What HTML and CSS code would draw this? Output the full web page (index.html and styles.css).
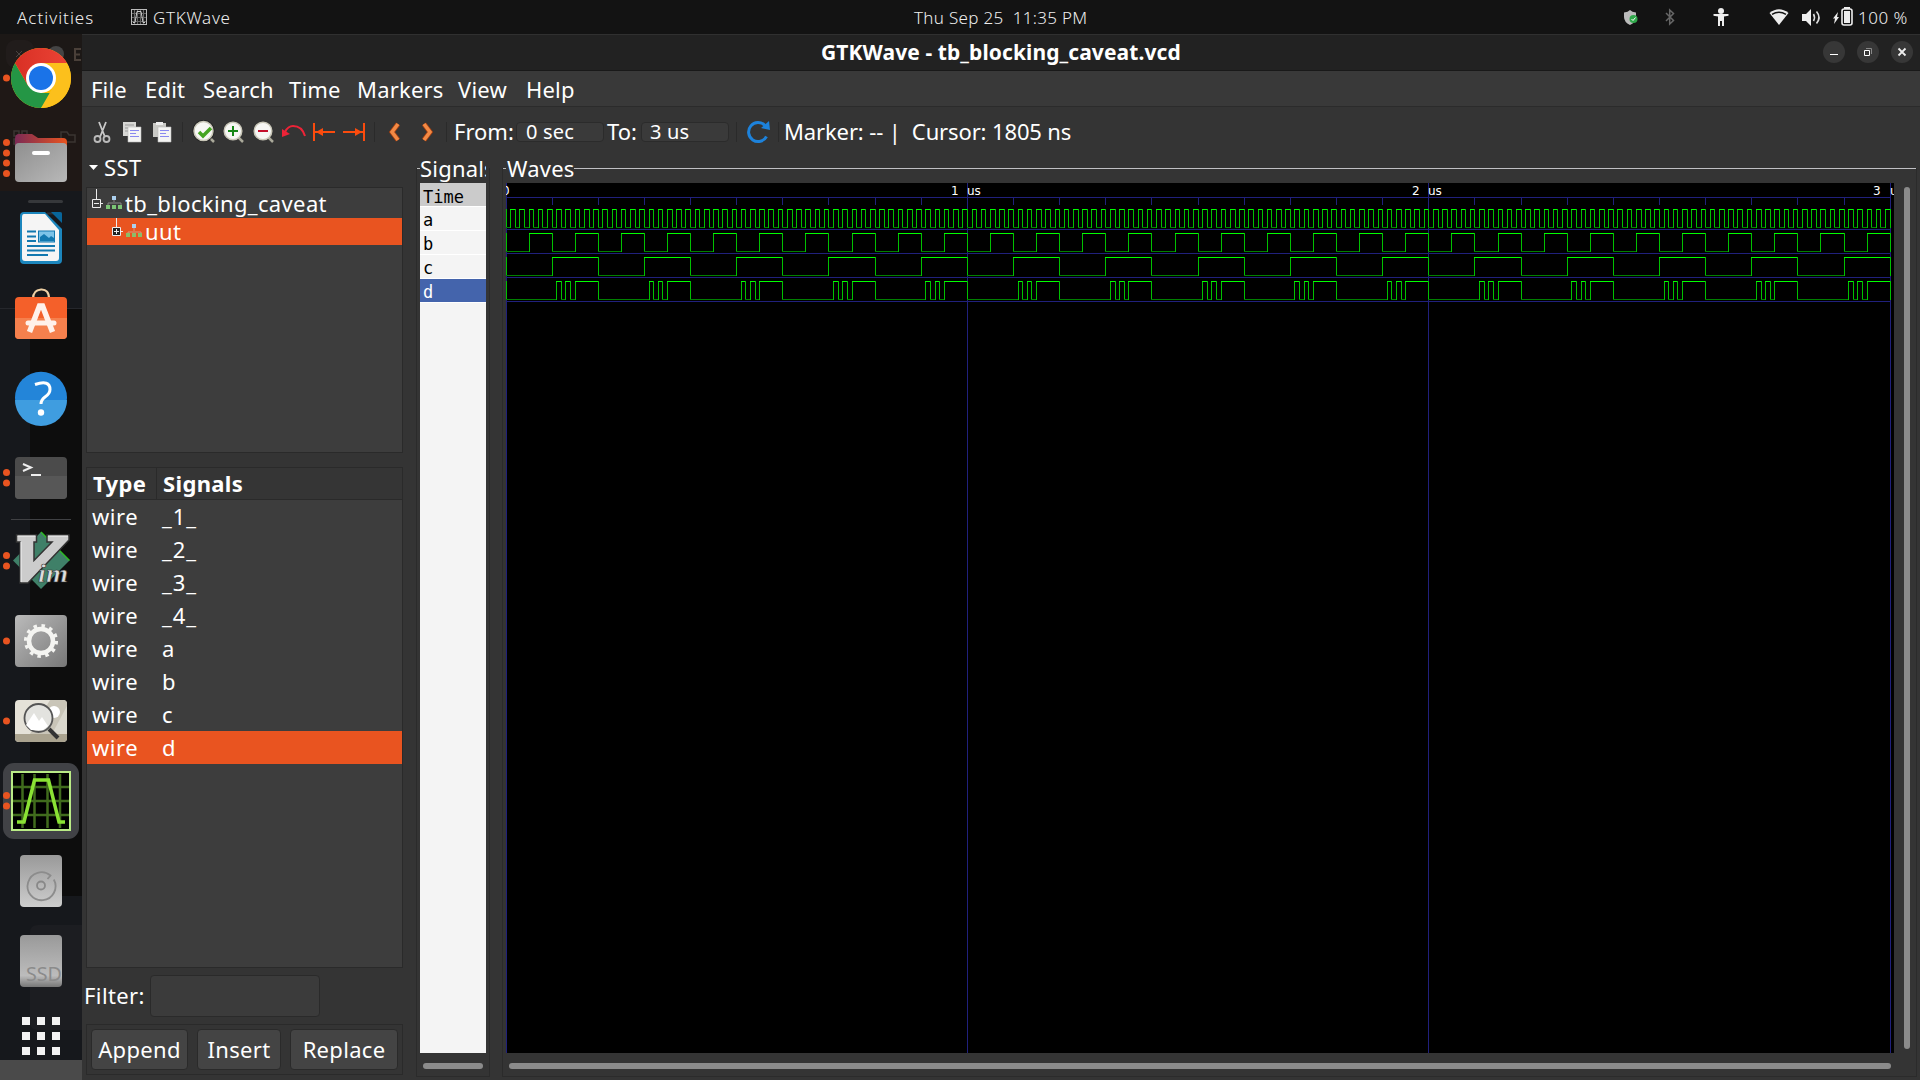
FILE: index.html
```html
<!DOCTYPE html>
<html lang="en">
<head>
<meta charset="utf-8">
<title>GTKWave - tb_blocking_caveat.vcd</title>
<link rel="stylesheet" href="styles.css">
</head>
<body>
<header class="topbar">
  <span class="activities">Activities</span>
  <svg class="app-icon" width="16" height="16" viewBox="0 0 16 16"><rect x=".5" y=".5" width="15" height="15" fill="#181818" stroke="#bbb"/><path d="M3.500 1v14M6.500 1v14M9.500 1v14M12.500 1v14M1 4.500h14M1 8.500h14M1 12.500h14" stroke="#666"/><path d="M2 13.500h2L6 2.500h4l2 11h2" fill="none" stroke="#ccc"/></svg>
  <span class="appname">GTKWave</span>
  <span class="clock">Thu Sep 25&nbsp; 11:35 PM</span>
  <svg width="240" height="34" viewBox="1620 0 240 34">
    <path d="M1624 12.500Q1628 12 1630 10Q1632 12 1636 12.500V17Q1636 22 1630 25Q1624 22 1624 17Z" fill="#bbb"/><circle cx="1633.500" cy="19" r="4" fill="#2fa84a"/><path d="M1631.500 19l1.500 1.500 2.500-3" stroke="#fff" fill="none"/>
    <path d="M1666 13l7.500 7.500-3.800 3.500V10l3.800 3.500-7.500 7.500" fill="none" stroke="#666" stroke-width="1.500"/>
    <circle cx="1721" cy="11" r="3" fill="#eee"/><path d="M1713.500 14h15v1.800l-4.500.6V26h-2v-5h-2v5h-2v-9.600l-4.500-.6z" fill="#eee"/>
    <path d="M1769.500 13Q1779 5.500 1788.500 13L1779 25Z" fill="#eee"/><path d="M1772 14.300q7-4.300 14 0" fill="none" stroke="#151515" stroke-width="1.500"/>
    <path d="M1802 14h4l5-5v17l-5-5h-4z" fill="#eee"/><path d="M1813.500 14q2 3.500 0 7M1816.500 11.500q5 6 0 12" fill="none" stroke="#ddd" stroke-width="1.600"/>
    <path d="M1838 12l-5 6.500h2l-1 5.500 5-7h-2z" fill="#eee"/><rect x="1842" y="9" width="10" height="16" rx="2" fill="none" stroke="#eee" stroke-width="1.600"/><rect x="1844" y="7" width="6" height="2" fill="#eee"/><rect x="1844" y="11" width="6" height="12" fill="#eee"/>
  </svg>
  <span class="battery">100 %</span>
</header>
<div class="desktop">
  <aside class="dock">
    <svg width="82" height="1046" viewBox="0 34 82 1046">
      <defs>
        <linearGradient id="gray" x2="1" y2="1"><stop stop-color="#bbb"/><stop offset="1" stop-color="#777"/></linearGradient>
        <linearGradient id="folder" x2="1" y2="1"><stop stop-color="#8f8f8f"/><stop offset="1" stop-color="#b8b8b8"/></linearGradient>
        <linearGradient id="tab"><stop stop-color="#7b2a55"/><stop offset="1" stop-color="#e95420"/></linearGradient>
        <linearGradient id="disk" x2="0" y2="1"><stop stop-color="#999"/><stop offset="1" stop-color="#cdcdcd"/></linearGradient>
        <linearGradient id="ssd" x2="0" y2="1"><stop stop-color="#999"/><stop offset=".78" stop-color="#bcbcbc"/><stop offset="1" stop-color="#777"/></linearGradient>
        <linearGradient id="red"><stop stop-color="#d93025"/><stop offset="1" stop-color="#ea4335"/></linearGradient>
      </defs>
      <path d="M0 34h82v157H0z" fill="#1f1816"/><path d="M0 34h82v40H0z" fill="#1c1816"/><rect x="6" y="40" width="28" height="28" rx="9" fill="#211c1b"/><circle cx="56" cy="54" r="8" fill="#444"/><path d="M81 49h-6v11h6M75 54.500h5" stroke="#4a4039" stroke-width="2" fill="none"/><path d="M16 51l6 6M22 51l-6 6" stroke="#4a4542"/>
      <path d="M14 131h5v5h-5zM22 131h5v5h-5zM14 139h5v5h-5zM61 132h6l2 3h6v7H61z" fill="none" stroke="#3b3532" stroke-width="1.500"/>
      <path d="M0 191h82v869H0z" fill="#16181c"/><path d="M30 309h52v587H30z" fill="#0d0d0d"/><path d="M0 308.500h82" stroke="#25272c"/><path d="M38 925h44v105H38q-8 0-8-8V933q0-8 8-8" fill="#1c1d21"/><path d="M0 1060h82v20H0z" fill="#4a4a4a"/>
      <!-- Chrome -->
      <g><circle cx="41" cy="78" r="30" fill="#fbbc04"/><path d="M15 63L28 85.500 41 93h13L41 108A30 30 0 0 1 15 63" fill="#249645"/><path d="M15 63A30 30 0 0 1 67 63H41L28 85.500Z" fill="url(#red)"/><path d="M54 85.500L41 108A30 30 0 0 0 67 63H41z" fill="#fcc01c"/><circle cx="41" cy="78" r="15" fill="#fff"/><circle cx="41" cy="78" r="12" fill="#1a73e8"/></g>
      <!-- Files -->
      <path d="M15 148v-9q0-5 4-5h13l6 4h25q4 0 4 4v8z" fill="url(#tab)"/><rect x="15" y="143" width="52" height="39" rx="4" fill="url(#folder)"/><rect x="32" y="151" width="18" height="4" rx="2" fill="#fff"/>
      <rect x="28" y="200" width="35" height="3" rx="1.500" fill="#36383b"/><path d="M47 213.500h15" stroke="#2d3035" stroke-width="2"/>
      <!-- Writer -->
      <path d="M24 212h21l17 17v31q0 4-4 4H24q-4 0-4-4v-44q0-4 4-4" fill="#1c86bd"/><path d="M24 214h21l14 16v28q0 3-3 3H25q-3 0-3-3v-41q0-3 2-3" fill="#f5f5f5"/><path d="M51 212h9q2 0 2 2v9z" fill="#08669b"/><path d="M27 231.500h9M27 236.500h9M27 241h9M27 246h28M27 250.500h28M27 255h21" stroke="#1278af" stroke-width="1.800"/><rect x="38.500" y="231" width="16" height="11" fill="#7cc3e8" stroke="#1278af"/><path d="M40 241v-4l4-3 5 4 2-2 3 2v3z" fill="#1278af"/>
      <!-- Software -->
      <path d="M33 299q0-9 8-9.500t8 9.500" fill="none" stroke="#efd0a4" stroke-width="2.200"/><rect x="15" y="297" width="52" height="42" rx="4" fill="#f4602a"/><path d="M15 318h52v17q0 4-4 4H19q-4 0-4-4z" fill="#f5804d"/><path d="M29.500 332L39.500 306h3l10 26" fill="none" stroke="#fff1ea" stroke-width="5.500"/><path d="M28 323h26" stroke="#fff1ea" stroke-width="5" stroke-linecap="round"/>
      <!-- Help -->
      <circle cx="41" cy="397.700" r="26" fill="#2385d9"/><path d="M15 400a26 26 0 0 0 52 0z" fill="#3f9de0"/><path d="M35 384.500q15-5 15 5 0 4-5 7.500-4 3-4 7" fill="none" stroke="#fff" stroke-width="3"/><circle cx="41" cy="412.500" r="3.200" fill="#fff"/>
      <!-- Terminal -->
      <rect x="15" y="457" width="52" height="42" rx="4" fill="#4b4b4b"/><path d="M15 476h52v19q0 4-4 4H19q-4 0-4-4z" fill="#575757"/><path d="M23 464l8 3.500-8 3.500M31 475h10" fill="none" stroke="#eee" stroke-width="2"/>
      <path d="M11 519.500h60" stroke="#404144"/>
      <!-- Vim -->
      <path d="M41 532l28.500 28.500L41 589 13 560.500z" fill="#3f8068"/><path d="M41 532l28.500 28.500" stroke="#2dbb22" stroke-width="1.500"/><path d="M16.500 535h20v7h-2.500v18.500L52 542h-5v-7h22v5L28 583h-8v-41h-3.500z" fill="#ccc" stroke="#333" stroke-width="1.500"/><path d="M17.500 536h18M48 536h20M21 542v40" stroke="#f4f4f4"/><text x="38" y="581.500" class="vim" textLength="30" lengthAdjust="spacingAndGlyphs">im</text>
      <!-- Settings -->
      <rect x="15" y="615" width="52" height="52" rx="4" fill="url(#gray)"/><circle cx="41" cy="641" r="12" fill="none" stroke="#f4f4f1" stroke-width="4.500"/><circle cx="41" cy="641" r="15.300" fill="none" stroke="#f4f4f1" stroke-width="3.500" stroke-dasharray="3.500 4.511"/>
      <!-- Image viewer -->
      <rect x="15" y="700" width="52" height="42" rx="4" fill="#e5e2d8"/><path d="M50 700h13q4 0 4 4v30H30z" fill="#c9c5b8"/><path d="M67 706v28H52z" fill="#dad8ce"/><path d="M15 734h52v4q0 4-4 4H19q-4 0-4-4z" fill="#aaa38f"/><circle cx="54" cy="712" r="6" fill="#fff"/><circle cx="38.500" cy="718" r="14" fill="#e3e3df" stroke="#555" stroke-width="1.800"/><path d="M26 725l8-12 5 8 3-4 6 9-5 4H31z" fill="#fff"/><path d="M49 729l9 9" stroke="#333" stroke-width="4"/>
      <!-- GTKWave -->
      <rect x="3" y="763" width="76" height="76" rx="11" fill="#414246"/><rect x="12" y="772" width="58" height="58" fill="#000" stroke="#b9ea86" stroke-width="2"/><path d="M22.500 774v54M34.500 774v54M47.500 774v54M60 774v54M13 787h56M13 801h56M13 815h56" stroke="#406b1d" stroke-width="2.500"/><path d="M17 822h7L34.500 780h14L59 822h6" fill="none" stroke="#8ae234" stroke-width="3.500"/>
      <!-- Drives -->
      <rect x="20" y="855" width="42" height="52" rx="4" fill="url(#disk)"/><path d="M53.800 879.500a14 14 0 1 1-3.300-4l-3 3.500" fill="none" stroke="#8c8c8c" stroke-width="1.800"/><circle cx="41" cy="885.500" r="4" fill="none" stroke="#888" stroke-width="1.800"/>
      <rect x="20" y="935" width="42" height="52" rx="4" fill="url(#ssd)"/><text x="26" y="981" class="ssd" textLength="36" lengthAdjust="spacingAndGlyphs">SSD</text>
      <path d="M22 1021h8M37 1021h8M52 1021h8M22 1036h8M37 1036h8M52 1036h8M22 1051h8M37 1051h8M52 1051h8" stroke="#f2f2f2" stroke-width="8"/>
      <g fill="#e95420"><circle cx="6.500" cy="78" r="3.500"/><circle cx="6.500" cy="142.500" r="3.500"/><circle cx="6.500" cy="153" r="3.500"/><circle cx="6.500" cy="163" r="3.500"/><circle cx="6.500" cy="173.500" r="3.500"/><circle cx="6.500" cy="472.500" r="3.500"/><circle cx="6.500" cy="483" r="3.500"/><circle cx="6.500" cy="555.500" r="3.500"/><circle cx="6.500" cy="566" r="3.500"/><circle cx="6.500" cy="641" r="3.500"/><circle cx="6.500" cy="721" r="3.500"/><circle cx="6.500" cy="795.500" r="3.500"/><circle cx="6.500" cy="806" r="3.500"/></g>
    </svg>
  </aside>
  <main class="window">
    <div class="titlebar"><span class="title">GTKWave - tb_blocking_caveat.vcd</span>
      <svg class="controls" width="90" height="24" viewBox="0 0 90 24"><g fill="#373737"><circle cx="11" cy="12" r="11"/><circle cx="45" cy="12" r="11"/><circle cx="79" cy="12" r="11"/></g><path d="M7 14.500h8M41.500 10.500h5v5h-5z" fill="none" stroke="#fff"/><path d="M43 8.500h5.500v5.500" fill="none" stroke="#888"/><path d="M75.500 8.500l7 7M82.500 8.500l-7 7" stroke="#eee" stroke-width="1.800"/></svg>
    </div>
    <nav class="menubar"><span class="m1">File</span><span class="m2">Edit</span><span class="m3">Search</span><span class="m4">Time</span><span class="m5">Markers</span><span class="m6">View</span><span class="m7">Help</span></nav>
    <div class="toolbar">
      <svg width="368" height="50" viewBox="82 107 368 50">
        <path d="M99 122l6 15M106 122l-6 15" stroke="#c8c8c8" stroke-width="1.800"/><circle cx="97.500" cy="139" r="3" fill="none" stroke="#bbb" stroke-width="1.800"/><circle cx="106.500" cy="139" r="3" fill="none" stroke="#bbb" stroke-width="1.800"/>
        <path d="M123 122h13v14h-13z" fill="#d7d7d4"/><path d="M125 125h9M125 128h7M125 131h5" stroke="#999"/><path d="M128 127h13v15h-13z" fill="#f5f5f3" stroke="#bbb" stroke-width=".6"/><path d="M130 130.500h9M130 133.500h6M130 136.500h9" stroke="#8a8af0"/>
        <path d="M153 123h13v14h-13z" fill="#c9c9c5"/><path d="M156 122h7v3h-7z" fill="#eee"/><path d="M158 127h13v15h-13z" fill="#f5f5f3" stroke="#bbb" stroke-width=".6"/><path d="M160 130.500h9M160 133.500h6M160 136.500h9" stroke="#8a8af0"/>
        <path d="M182.500 122v20M374.500 122v20M446.500 122v20" stroke="#2a2a2a"/>
        <path d="M209 137l5 5M238 137l5 5M268 137l5 5" stroke="#aaa99a" stroke-width="2.500"/><circle cx="203.500" cy="131" r="11" fill="#222"/><g fill="#f7f7f4" stroke="#c9c7b8" stroke-width="1.500"><circle cx="203.500" cy="131" r="9.500"/><circle cx="233" cy="131" r="8.800"/><circle cx="263" cy="131" r="8.800"/></g><path d="M199 132l4 4 8-8" fill="none" stroke="#45a522" stroke-width="3.500"/><path d="M228 131h10M233 126v10" stroke="#178717" stroke-width="2"/><path d="M258 131h10" stroke="#c40f2b" stroke-width="2"/>
        <path d="M305 136q-3-10-12-10-5 0-8 6" fill="none" stroke="#ed2337" stroke-width="2"/><path d="M282 129v8l8-3z" fill="#ed2337"/>
        <path d="M314 123v18M315 132h20M364 123v18M343 132h20" stroke="#fb4b0d" stroke-width="2"/><path d="M316 132l7-4v8zM362 132l-7-4v8z" fill="#fb4b0d"/>
        <path d="M398 124l-6 8 6 8M424 124l6 8-6 8" fill="none" stroke="#a84010" stroke-width="5"/><path d="M398 124l-6 8 6 8M424 124l6 8-6 8" fill="none" stroke="#f28a45" stroke-width="3.500"/>
      </svg>
      <span class="ui from">From:</span><div class="entry">0 sec</div><span class="ui to">To:</span><div class="entry e2">3 us</div>
      <svg class="reload" width="46" height="24" viewBox="0 0 46 24"><path d="M1.500 2v20M43.500 2v20" stroke="#2a2a2a"/><path d="M31.500 16.500A9.500 9.500 0 1 1 30 5.500" fill="none" stroke="#1d82db" stroke-width="3"/><path d="M34 1l1 9-9-2z" fill="#1d82db"/></svg>
      <span class="ui marker">Marker: -- |&nbsp; Cursor: 1805 ns</span>
    </div>
    <div class="content">
      <section class="left">
        <div class="sst"><i></i><span>SST</span></div>
        <div class="tree">
          <div class="row r1"><svg width="38" height="28" viewBox="0 0 38 28"><path d="M9.500 1v10M14 15.500h2" stroke="#eee"/><path d="M5.500 11.500h8v8h-8zM7 15.500h5" fill="none" stroke="#eee"/><path d="M27 9v5M21 18v-3h13v3" fill="none" stroke="#888"/><path d="M25 8h4v4h-4z" fill="#acd0ef"/><path d="M19 17h4v4h-4zM25 17h4v4h-4zM31 17h4v4h-4z" fill="#7cc576"/></svg><span>tb_blocking_caveat</span></div>
          <div class="row r2"><svg width="58" height="27" viewBox="0 0 58 27"><path d="M29.500 0v9M34 13.500h2" stroke="#eee"/><path d="M25.500 9.500h8v8h-8z" fill="#222" stroke="#eee"/><path d="M27 13.500h5M29.500 11v5" stroke="#eee"/><path d="M47 8v5M41 17v-3h13v3" fill="none" stroke="#d69a80"/><path d="M45 6h4v4h-4z" fill="#acd0ef"/><path d="M39 15h4v4h-4zM45 15h4v4h-4zM51 15h4v4h-4z" fill="#8cbd67"/></svg><span>uut</span></div>
        </div>
        <div class="list">
          <div class="lh"><span>Type</span><span>Signals</span></div>
          <div class="lr"><span>wire</span><span class="net">_1_</span></div><div class="lr"><span>wire</span><span class="net">_2_</span></div><div class="lr"><span>wire</span><span class="net">_3_</span></div><div class="lr"><span>wire</span><span class="net">_4_</span></div>
          <div class="lr"><span>wire</span><span>a</span></div><div class="lr"><span>wire</span><span>b</span></div><div class="lr"><span>wire</span><span>c</span></div><div class="lr sel"><span>wire</span><span>d</span></div>
        </div>
        <div class="filter"><span>Filter:</span><div class="fentry"></div></div>
        <div class="actions"><div class="btn b1">Append</div><div class="btn b2">Insert</div><div class="btn b3">Replace</div></div>
      </section>
      <section class="signals">
        <div class="legend">Signals</div>
        <div class="names"><div class="time">Time</div><div>a</div><div>b</div><div>c</div><div class="on">d</div></div>
        <div class="hbar"></div>
      </section>
      <section class="waves">
        <div class="wlegend"><span>Waves</span></div>
        <div class="wrow"><svg id="plot" width="1388" height="870" viewBox="0 0 1388 870"></svg><div class="vbar"></div></div>
        <div class="hbar wide"></div>
      </section>
    </div>
  </main>
</div>
<script src="waves.js"></script>
</body>
</html>
```
FILE: styles.css
```css
* { box-sizing: border-box; }
body { margin: 0; width: 1920px; height: 1080px; overflow: hidden; background: #343434; color: #fff; font: 22px/30px "Noto Sans", sans-serif; white-space: nowrap; }
svg { display: block; flex: none; }
.topbar { display: flex; height: 34px; background: #131313; font-size: 17px; font-weight: 300; line-height: 35px; color: #eee; }
.app-icon { margin-top: 9px; }
.activities { flex: none; width: 131px; padding-left: 17px; letter-spacing: 1px; }
.appname { flex: none; width: 761px; padding-left: 6px; letter-spacing: .7px; }
.clock { flex: none; width: 706px; margin-left: 6px; letter-spacing: .3px; }
.battery { margin-left: -2px; letter-spacing: .5px; }
.desktop { display: flex; height: 1046px; }
.dock { width: 82px; flex: none; }
.window { flex: 1; display: flex; flex-direction: column; border-top: 1px solid #303030; }
.titlebar { height: 36px; background: #222; display: flex; justify-content: space-between; border-bottom: 1px solid #191919; font-weight: 700; font-size: 21px; line-height: 34px; }
.title { margin-left: 739px; letter-spacing: .09px; }
.controls { margin: 5px 7px 0 0; }
.menubar { height: 36px; background: #393939; border-bottom: 1px solid #2b2b2b; display: flex; line-height: 36px; padding-left: 9px; letter-spacing: .2px; }
.menubar span { flex: none; }
.m1 { width: 54px; } .m2 { width: 58px; } .m3 { width: 86px; } .m4 { width: 68px; } .m5 { width: 101px; } .m6 { width: 68px; }
.toolbar { height: 50px; display: flex; align-items: center; }
.ui { flex: none; line-height: 48px; margin-top: -2px; }
.from { width: 62px; margin-left: 4px; }
.to { width: 34px; }
.entry { width: 88px; height: 20px; border: 1px solid #2b2b2b; border-radius: 4px; background: #3a3a3a; font-size: 20px; line-height: 18px; padding-left: 9px; margin-right: 3px; flex: none; letter-spacing: .2px; }
.e2 { padding-left: 8px; }
.reload { margin-left: 3px; }
.marker { margin-left: 3px; letter-spacing: -.13px; }
.content { flex: 1; display: flex; }
.left { width: 334px; display: flex; flex-direction: column; }
.sst { height: 30px; display: flex; padding-left: 7px; gap: 6px; line-height: 20px; letter-spacing: .4px; }
.sst i { width: 9px; height: 5px; background: #fff; clip-path: polygon(0 0, 100% 0, 50% 100%); margin-top: 8px; }
.tree { margin-left: 4px; width: 317px; height: 266px; background: #3d3d3d; border: 1px solid #2a2a2a; letter-spacing: .36px; }
.row { display: flex; line-height: 30px; height: 30px; }
.r2 { height: 27px; line-height: 26px; background: #e95420; }
.list { margin: 14px 0 0 4px; width: 317px; height: 501px; background: #3d3d3d; border: 1px solid #2a2a2a; }
.lh { height: 32px; display: flex; background: #353535; border-bottom: 1px solid #2a2a2a; font-weight: 700; line-height: 31px; letter-spacing: .35px; }
.lh span:first-child { width: 70px; padding-left: 6px; border-right: 1px solid #2a2a2a; }
.lh span:last-child { padding-left: 6px; }
.lr { height: 33px; display: flex; line-height: 33px; padding-left: 5px; }
.lr span:first-child { width: 70px; letter-spacing: .55px; }
.net { letter-spacing: 1px; }
.sel { background: #e95420; }
.filter { display: flex; margin: 7px 0 0 2px; line-height: 40px; height: 42px; letter-spacing: .4px; }
.filter span { width: 66px; }
.fentry { width: 170px; border: 1px solid #2a2a2a; border-radius: 4px; background: #3b3b3b; }
.actions { margin: 7px 0 0 4px; width: 317px; height: 51px; border: 1px solid #2a2a2a; display: flex; padding: 4px; letter-spacing: .3px; }
.btn { height: 41px; border: 1px solid #2a2a2a; border-radius: 4px; background: #444; display: flex; justify-content: center; line-height: 38px; }
.b1 { width: 97px; margin-right: 9px; } .b2 { width: 84px; margin-right: 9px; } .b3 { width: 108px; }
.signals { width: 74px; margin: 11px 12px 3px 0; border: 1px solid #2b2b2b; border-top: 0; padding-left: 3px; }
.legend, .wlegend { display: flex; height: 15px; line-height: 0; letter-spacing: .2px; }
.legend { width: 69px; margin-left: -3px; clip-path: inset(-20px 0 -20px 0); }
.wlegend { margin-left: -3px; }
.legend::before, .wlegend::before { content: ""; width: 3px; height: 1px; background: #bbb; flex: none; }
.wlegend::before { margin-right: 1px; }
.wlegend::after { content: ""; height: 1px; background: #c0c0c4; flex: 1; }
.names { width: 66px; height: 870px; background: #f4f4f4; color: #000; font: 17px/26px "DejaVu Sans Mono", monospace; }
.names div { height: 24px; border-bottom: 1px solid #fff; padding-left: 3px; }
.names .time { background: #cbcbcb; line-height: 29px; }
.names .on { background: #4464ac; color: #fff; }
.hbar { width: 60px; height: 6px; margin: 10px 0 0 3px; border-radius: 3px; background: #8b8b8b; }
.waves { width: 1415px; margin: 11px 0 3px 0; border: 1px solid #2b2b2b; border-top: 0; padding-left: 3px; }
.wrow { display: flex; }
.vbar { width: 6px; height: 862px; margin: 4px 0 0 10px; border-radius: 3px; background: #8b8b8b; }
.wide { width: 1382px; }
.vim { font: italic 700 26px "Liberation Serif", serif; fill: #ddd; stroke: #333; stroke-width: .6px; }
.ssd { font: 19px "Noto Sans", sans-serif; fill: #8b8b8b; }
#plot { background: #000; shape-rendering: crispEdges; }
#plot text { font: 12px "DejaVu Sans", sans-serif; fill: #fff; }
```
FILE: waves.js
```js
const plot = document.getElementById("plot");
const NS = "http://www.w3.org/2000/svg";
const px = ns => Math.floor(ns * 461.4 / 1000);

function rect(x, y, w, h, fill) {
  const r = document.createElementNS(NS, "rect");
  for (const [k, v] of Object.entries({ x, y, width: w, height: h, fill })) r.setAttribute(k, v);
  plot.appendChild(r);
}
function label(x, text) {
  const t = document.createElementNS(NS, "text");
  t.setAttribute("x", x);
  t.setAttribute("y", 12);
  t.textContent = text;
  plot.appendChild(t);
}

for (let us = 0; us <= 3; us++) rect(px(us * 1000), 0, 1, 870, "#20207c");
rect(0, 14, 1385, 1, "#20207c");
for (let n = 100; n < 3000; n += 100) rect(px(n), 14, 1, 8, "#20207c");
for (let i = 0; i < 4; i++) rect(0, 46 + i * 24, 1385, 1, "#20207c");

// Levels as functions of time in ns
const a = t => Math.floor(t / 10) % 2;
const b = t => Math.floor(t / 50) % 2;
const c = t => Math.floor(t / 100) % 2;
const d = t => c(t) && (a(t) || b(t));

[a, b, c, d].forEach((level, row) => {
  const top = 26 + row * 24;
  rect(0, top, 1, 19, "#00c000");
  for (let t = 0; t < 3000; t += 10) {
    const high = level(t);
    const x = px(t), end = px(t + 10);
    rect(x, high ? top : top + 18, end - x + 1, 1, high ? "#00ff00" : "#008000");
    if (t + 10 === 3000 || Boolean(level(t + 10)) !== Boolean(high)) rect(end, top, 1, 19, "#00c000");
  }
});

label(-4, "0");
label(445, "1");
label(461, "us");
label(906, "2");
label(922, "us");
label(1367, "3");
label(1384, "us");
```
